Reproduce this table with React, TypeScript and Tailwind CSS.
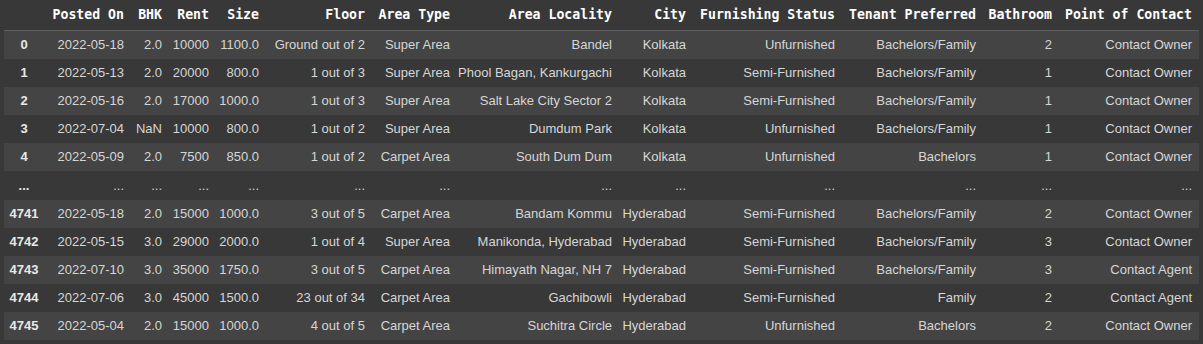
import React from 'react';

type Col = { name: string; w: string };

const cols: Col[] = [
  { name: 'Posted On', w: 'w-[87px]' },
  { name: 'BHK', w: 'w-[38px]' },
  { name: 'Rent', w: 'w-[47px]' },
  { name: 'Size', w: 'w-[50px]' },
  { name: 'Floor', w: 'w-[106px]' },
  { name: 'Area Type', w: 'w-[85px]' },
  { name: 'Area Locality', w: 'w-[162px]' },
  { name: 'City', w: 'w-[74px]' },
  { name: 'Furnishing Status', w: 'w-[149px]' },
  { name: 'Tenant Preferred', w: 'w-[141px]' },
  { name: 'Bathroom', w: 'w-[76px]' },
  { name: 'Point of Contact', w: 'w-[140px]' },
];

const rows: string[][] = [
  ['0', '2022-05-18', '2.0', '10000', '1100.0', 'Ground out of 2', 'Super Area', 'Bandel', 'Kolkata', 'Unfurnished', 'Bachelors/Family', '2', 'Contact Owner'],
  ['1', '2022-05-13', '2.0', '20000', '800.0', '1 out of 3', 'Super Area', 'Phool Bagan, Kankurgachi', 'Kolkata', 'Semi-Furnished', 'Bachelors/Family', '1', 'Contact Owner'],
  ['2', '2022-05-16', '2.0', '17000', '1000.0', '1 out of 3', 'Super Area', 'Salt Lake City Sector 2', 'Kolkata', 'Semi-Furnished', 'Bachelors/Family', '1', 'Contact Owner'],
  ['3', '2022-07-04', 'NaN', '10000', '800.0', '1 out of 2', 'Super Area', 'Dumdum Park', 'Kolkata', 'Unfurnished', 'Bachelors/Family', '1', 'Contact Owner'],
  ['4', '2022-05-09', '2.0', '7500', '850.0', '1 out of 2', 'Carpet Area', 'South Dum Dum', 'Kolkata', 'Unfurnished', 'Bachelors', '1', 'Contact Owner'],
  ['...', '...', '...', '...', '...', '...', '...', '...', '...', '...', '...', '...', '...'],
  ['4741', '2022-05-18', '2.0', '15000', '1000.0', '3 out of 5', 'Carpet Area', 'Bandam Kommu', 'Hyderabad', 'Semi-Furnished', 'Bachelors/Family', '2', 'Contact Owner'],
  ['4742', '2022-05-15', '3.0', '29000', '2000.0', '1 out of 4', 'Super Area', 'Manikonda, Hyderabad', 'Hyderabad', 'Semi-Furnished', 'Bachelors/Family', '3', 'Contact Owner'],
  ['4743', '2022-07-10', '3.0', '35000', '1750.0', '3 out of 5', 'Carpet Area', 'Himayath Nagar, NH 7', 'Hyderabad', 'Semi-Furnished', 'Bachelors/Family', '3', 'Contact Agent'],
  ['4744', '2022-07-06', '3.0', '45000', '1500.0', '23 out of 34', 'Carpet Area', 'Gachibowli', 'Hyderabad', 'Semi-Furnished', 'Family', '2', 'Contact Agent'],
  ['4745', '2022-05-04', '2.0', '15000', '1000.0', '4 out of 5', 'Carpet Area', 'Suchitra Circle', 'Hyderabad', 'Unfurnished', 'Bachelors', '2', 'Contact Owner'],
];

export default function App() {
  return (
    <div className="w-[1203px] h-[344px] bg-[#383838] pl-[4px] overflow-hidden">
      {/* header */}
      <div className="flex h-[31px] items-center border-b border-[#5f5f5f] font-['DejaVu_Sans_Mono','Liberation_Mono',monospace] text-[13.2px] font-bold text-white w-[1195px]">
        <div className="w-[40px] shrink-0" />
        {cols.map((c) => (
          <div key={c.name} className={`${c.w} shrink-0 pr-[7px] text-right whitespace-nowrap`}>
            {c.name}
          </div>
        ))}
      </div>
      {/* body */}
      <div className="font-['Liberation_Sans',Arial,sans-serif] text-[13px] text-[#d6d6d6]">
        {rows.map((r, i) => (
          <div
            key={i}
            className={`flex items-center w-[1195px] ${r[0] === '...' ? 'h-[29px]' : 'h-[28px]'} ${i % 2 === 0 ? 'bg-[#444444]' : 'bg-[#383838]'}`}
          >
            <div className="w-[40px] shrink-0 text-center font-bold text-[#e8e8e8]">{r[0]}</div>
            {cols.map((c, j) => (
              <div key={c.name} className={`${c.w} shrink-0 pr-[7px] text-right whitespace-nowrap`}>
                {r[j + 1]}
              </div>
            ))}
          </div>
        ))}
      </div>
    </div>
  );
}
